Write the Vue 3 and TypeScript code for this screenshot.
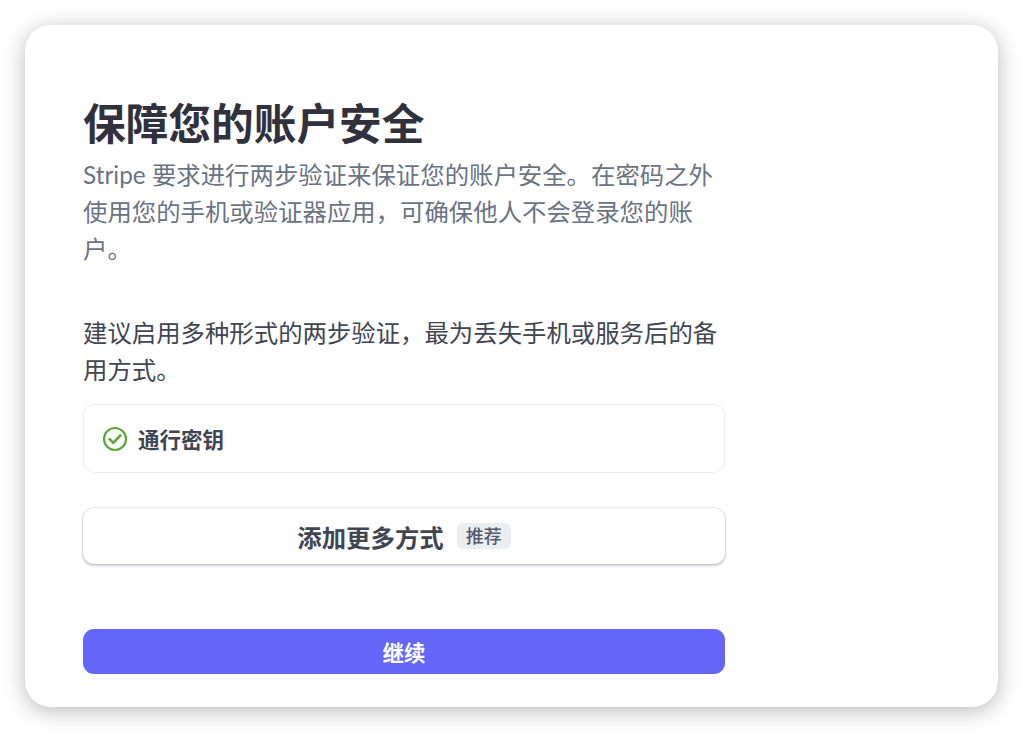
<script setup lang="ts">
const title: string = '保障您的账户安全'
</script>

<template>
  <div class="page">
    <main class="card">
      <div class="content">
        <h1 class="title">{{ title }}</h1>
        <p class="lead">Stripe 要求进行两步验证来保证您的账户安全。在密码之外使用您的手机或验证器应用，可确保他人不会登录您的账户。</p>
        <p class="note">建议启用多种形式的两步验证，最为丢失手机或服务后的备用方式。</p>
        <div class="method">
          <svg class="check" width="26" height="26" viewBox="0 0 26 26" fill="none">
            <circle cx="13" cy="13" r="11" stroke="#5fa53d" stroke-width="2.2" />
            <path d="M7.6 13.2l3.7 3.7 7-7.4" stroke="#5fa53d" stroke-width="2.6" stroke-linecap="round" stroke-linejoin="round" />
          </svg>
          <span>通行密钥</span>
        </div>
        <button class="more" type="button">
          <span>添加更多方式</span>
          <span class="badge">推荐</span>
        </button>
        <button class="continue" type="button">继续</button>
      </div>
    </main>
  </div>
</template>

<style>
html, body { margin: 0; background: #ffffff; }
</style>

<style scoped>
.page {
  width: 1024px;
  height: 732px;
  padding: 25px 26px 25px 25px;
  box-sizing: border-box;
  overflow: hidden;
  font-family: Lato, "Noto Sans CJK SC", sans-serif;
}
.card {
  height: 682px;
  background: #fff;
  border-radius: 26px;
  box-shadow: 0 4px 22px rgba(0, 0, 0, 0.28);
  padding: 72px 0 0 58px;
  box-sizing: border-box;
}
.content { width: 642px; }
.title {
  margin: 0;
  font-size: 42.7px;
  line-height: 54px;
  font-weight: 700;
  color: #30313d;
}
.lead, .note {
  margin: 0;
  font-size: 24.4px;
  line-height: 37px;
  width: 636px;
}
.lead { color: #6a7383; margin-top: 5px; }
.note { color: #414552; margin-top: 47px; }
.method {
  margin-top: 16px;
  height: 69px;
  box-sizing: border-box;
  border: 1px solid #ebeef1;
  border-radius: 11px;
  display: flex;
  align-items: center;
  gap: 10px;
  padding-left: 18px;
  font-size: 21.5px;
  font-weight: 700;
  color: #414552;
}
.more {
  margin-top: 35px;
  width: 100%;
  height: 56px;
  border: 0;
  border-radius: 11px;
  background: #fff;
  box-shadow: 0 0 0 1px rgba(60, 66, 87, 0.12), 0 2px 3px rgba(60, 66, 87, 0.25);
  display: flex;
  align-items: center;
  justify-content: center;
  gap: 13px;
  font-family: inherit;
  font-size: 24.4px;
  font-weight: 700;
  color: #414552;
}
.badge {
  font-size: 18px;
  line-height: 26px;
  padding: 0 9px;
  border-radius: 6px;
  background: #ebeef1;
  font-weight: 500;
  color: #545969;
}
.continue {
  display: block;
  margin-top: 65px;
  width: 100%;
  height: 45px;
  border: 0;
  border-radius: 11px;
  background: #6366f8;
  color: #fff;
  font-family: inherit;
  font-size: 21.5px;
  font-weight: 700;
}
</style>
